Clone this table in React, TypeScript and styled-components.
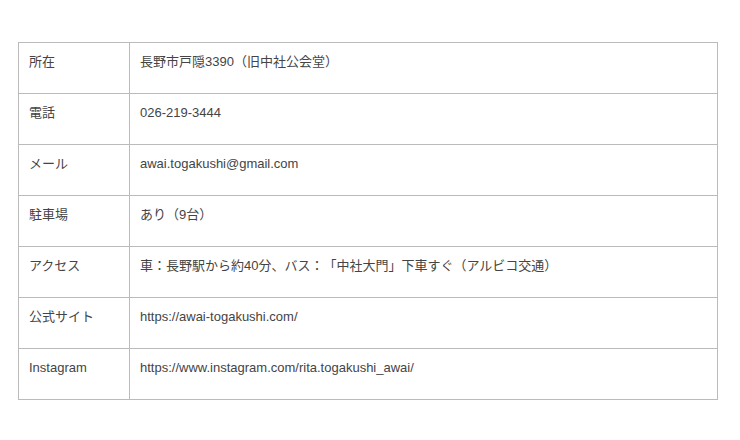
import styled, { createGlobalStyle } from "styled-components";

const GlobalStyle = createGlobalStyle`
  html, body {
    margin: 0;
    padding: 0;
    background: #fff;
  }
  body {
    font-family: "Liberation Sans", Arial, "Noto Sans CJK JP", sans-serif;
    color: #444;
  }
`;

const Page = styled.div`
  width: 740px;
  height: 440px;
  padding: 42px 0 0 18px;
  box-sizing: border-box;
`;

const InfoTable = styled.dl`
  margin: 0;
  width: 700px;
  display: grid;
  grid-template-columns: 111px 588px;
  border-top: 1px solid #bbb;
  border-left: 1px solid #bbb;
  box-sizing: border-box;
`;

const Cell = styled.div`
  margin: 0;
  height: 51px;
  box-sizing: border-box;
  padding: 9px 10px 0;
  border-right: 1px solid #bbb;
  border-bottom: 1px solid #bbb;
  font-size: 13px;
  line-height: 20px;
  color: #444;
  white-space: nowrap;
  text-spacing-trim: space-all;
`;

const rows: [string, string][] = [
  ["所在", "長野市戸隠3390（旧中社公会堂）"],
  ["電話", "026-219-3444"],
  ["メール", "awai.togakushi@gmail.com"],
  ["駐車場", "あり（9台）"],
  ["アクセス", "車：長野駅から約40分、バス：「中社大門」下車すぐ（アルビコ交通）"],
  ["公式サイト", "https://awai-togakushi.com/"],
  ["Instagram", "https://www.instagram.com/rita.togakushi_awai/"],
];

const App = () => {
  return (
    <>
      <GlobalStyle />
      <Page>
        <InfoTable>
          {rows.map(([label, value]) => [
            <Cell as="dt" key={label}>
              {label}
            </Cell>,
            <Cell as="dd" key={label + "-v"}>
              {value}
            </Cell>,
          ])}
        </InfoTable>
      </Page>
    </>
  );
};

export default App;
